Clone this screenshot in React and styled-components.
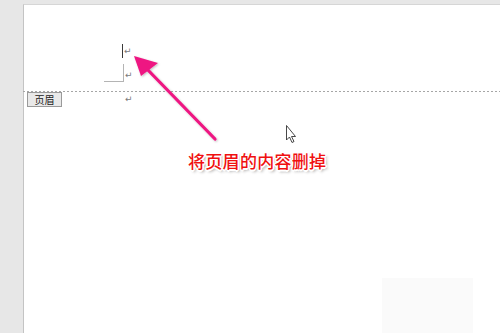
import React from 'react'
import styled, { createGlobalStyle } from 'styled-components'

const GlobalStyle = createGlobalStyle`
  html, body {
    margin: 0;
    padding: 0;
    background: #e7e7e7;
    font-family: "Noto Sans CJK SC", "Noto Sans", sans-serif;
  }
`

const Return = () => <ReturnMark>↵</ReturnMark>

const App = () => {
  return (
    <Screen>
      <GlobalStyle />
      <Page>
        <HeaderArea>
          <Line $top={37}>
            <Caret />
            <Return />
          </Line>
          <Line $top={8}>
            <Corner />
            <Return />
          </Line>
        </HeaderArea>
        <Divider />
        <TabRow>
          <HeaderTab>页眉</HeaderTab>
          <BodyLine>
            <Return />
          </BodyLine>
        </TabRow>

        <Callout>将页眉的内容删掉</Callout>
        <Watermark />
      </Page>

      {/* pink arrow pointing at the header caret */}
      <Overlay width="500" height="333" viewBox="0 0 500 333">
        <defs>
          <filter id="sh" x="-20%" y="-20%" width="140%" height="140%">
            <feDropShadow dx="1" dy="1" stdDeviation="1" floodColor="#000" floodOpacity="0.25" />
          </filter>
        </defs>
        <g filter="url(#sh)">
          <line x1="215" y1="139" x2="146" y2="68" stroke="#ee1582" strokeWidth="3.2" strokeLinecap="round" />
          <polygon points="134,56 158,63 141,76" fill="#ee1582" />
        </g>
        {/* mouse pointer */}
        <path
          d="M286.5 125.5 L286.5 140 L289.5 137 L292 142.5 L294 141.5 L291.5 136.5 L295.5 136.5 Z"
          fill="#fff"
          stroke="#333"
          strokeWidth="0.9"
          strokeLinejoin="round"
        />
      </Overlay>
    </Screen>
  )
}

const Screen = styled.div`
  position: relative;
  width: 500px;
  height: 333px;
  box-sizing: border-box;
  padding: 4px 0 0 23px;
  display: flex;
  overflow: hidden;
  background: #e7e7e7;
`

const Page = styled.div`
  position: relative;
  flex: 1;
  display: flex;
  flex-direction: column;
  background: #fff;
  border-left: 1px solid #c4c4c4;
  border-top: 1px solid #d6d6d6;
`

const HeaderArea = styled.div`
  height: 86px;
  box-sizing: border-box;
  padding-left: 80px;
`

const Divider = styled.div`
  height: 1px;
  margin-left: -1px;
  background: repeating-linear-gradient(90deg, #a6a6a6 0 2px, transparent 2px 4px);
`

const Line = styled.div`
  display: flex;
  align-items: flex-end;
  margin-top: ${p => p.$top}px;
  height: 16px;
`

const Caret = styled.div`
  width: 1px;
  height: 14px;
  background: #3a3a3a;
  margin-left: 18px;
`

const Corner = styled.div`
  width: 19px;
  height: 17px;
  border-right: 1px solid #b4b4b4;
  border-bottom: 1px solid #b4b4b4;
`

const ReturnMark = styled.span`
  font-family: "DejaVu Sans", sans-serif;
  font-size: 9px;
  line-height: 10px;
  color: #7a7a7a;
  margin-left: 1px;
  margin-bottom: 2px;
`

const TabRow = styled.div`
  display: flex;
  align-items: flex-start;
`

const HeaderTab = styled.div`
  margin-left: 3px;
  width: 35px;
  height: 15px;
  box-sizing: border-box;
  background: #e9e9e9;
  border: 1px solid #9a9a9a;
  font-size: 10px;
  line-height: 13px;
  text-align: center;
  color: #222;
`

const BodyLine = styled.div`
  margin-left: 62px;
  margin-top: 2px;
  display: flex;
`

const Callout = styled.div`
  position: absolute;
  left: 164px;
  top: 143px;
  font-family: "Noto Sans CJK SC", sans-serif;
  font-size: 17px;
  font-weight: 500;
  letter-spacing: 0.3px;
  color: #f01010;
  text-shadow:
    -1px -1px 0 #fff, 1px -1px 0 #fff, -1px 1px 0 #fff, 1px 1px 0 #fff,
    0 -1.5px 0 #fff, 0 1.5px 0 #fff, -1.5px 0 0 #fff, 1.5px 0 0 #fff,
    2px 2px 3px rgba(0, 0, 0, 0.45);
`

const Watermark = styled.div`
  position: absolute;
  left: 358px;
  top: 273px;
  width: 91px;
  height: 60px;
  background: #fafafa;
`

const Overlay = styled.svg`
  position: absolute;
  left: 0;
  top: 0;
  pointer-events: none;
`

export default App
